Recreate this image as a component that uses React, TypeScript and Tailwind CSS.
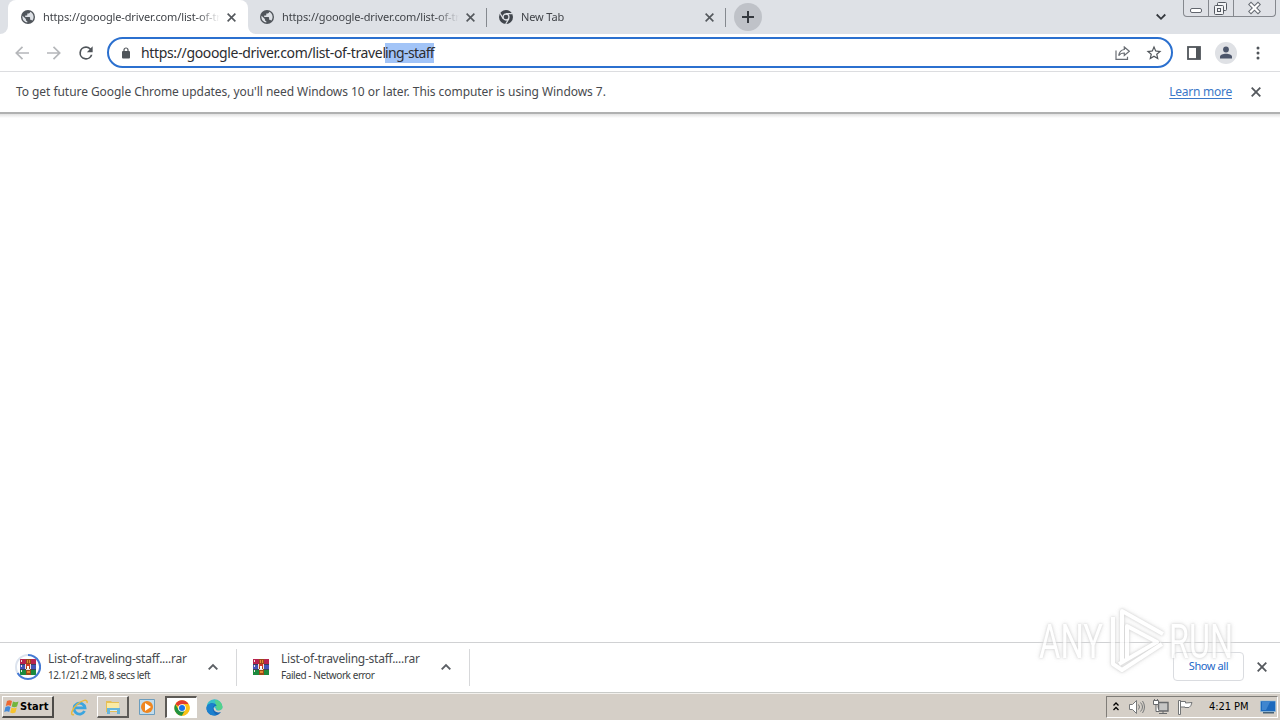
import type { ReactNode } from 'react';

function Globe() {
  return (
    <svg className="size-[14px] shrink-0" viewBox="2 2 20 20">
      <circle cx="12" cy="12" r="10" fill="#50555b" />
      <path
        d="M11 19.9C7 19.4 4 16 4 12c0-.6.1-1.2.2-1.8L9 15v1c0 1.100.9 2 2 2v1.930zM17.900 17.400c-.3-.8-1-1.400-1.900-1.400h-1v-3c0-.6-.4-1-1-1H8v-2h2c.6 0 1-.4 1-1V7h2c1.100 0 2-.9 2-2v-.4c2.900 1.200 5 4.100 5 7.400 0 2.100-.8 4-2.100 5.400z"
        fill="#dee1e6"
      />
    </svg>
  );
}

function Close({ className = 'size-[9px]' }: { className?: string }) {
  return (
    <svg className={`shrink-0 ${className}`} viewBox="0 0 10 10" fill="none" stroke="#54585d" strokeWidth="1.800">
      <path d="M.7.7l8.600 8.600M9.300.7L.7 9.300" />
    </svg>
  );
}

function ChromeMono() {
  return (
    <svg className="size-[14px] shrink-0" viewBox="0 0 14 14">
      <circle cx="7" cy="7" r="7" fill="#41464d" />
      <circle cx="7" cy="7" r="3" fill="none" stroke="#dee1e6" strokeWidth="1.300" />
      <path d="M7 3.700h6.500M4.200 8.600L1 3.200M9.900 8.600l-3.200 5.400" stroke="#dee1e6" strokeWidth="1.200" />
    </svg>
  );
}

function ChromeColor() {
  return (
    <svg className="size-4" viewBox="0 0 48 48">
      <circle cx="24" cy="24" r="23" fill="#fbc116" />
      <path d="M24 24L4.100 12.500A23 23 0 0 1 43.900 12.500H24z" fill="#e33b2e" />
      <path d="M4.100 12.500A23 23 0 0 0 24 47l10-17.300L24 24 14 29.700z" fill="#229342" />
      <path d="M24 12.500h19.900A23 23 0 0 1 24 47l10-17.300z" fill="#fbc116" />
      <circle cx="24" cy="24" r="11.500" fill="#fff" />
      <circle cx="24" cy="24" r="9" fill="#1a73e8" />
    </svg>
  );
}

function RarIcon() {
  return (
    <svg className="size-4" viewBox="0 0 16 16" shapeRendering="crispEdges">
      <path fill="#b8234f" d="M0 0h16v5H0z" />
      <path fill="#4554b8" d="M0 5h16v5H0z" />
      <path fill="#1c8a3e" d="M0 10h16v6H0z" />
      <path fill="#39405c" d="M0 5h16v1H0zM0 10h16v1H0z" />
      <path fill="#9b4a18" d="M6 0h5v16H6z" />
      <path fill="#e78a32" d="M7 1h1v3H7zM9 1h1v3H9zM7 12h3v2H7z" />
      <path fill="#efe6e0" d="M5 5h1v5H5zM10 5h1v5h-1zM6 10h4v1H6zM1 1h1v2H1zM1 6h1v2H1zM1 11h1v2H1z" />
      <path fill="#d23a28" d="M6 5h4v3H6z" />
      <path fill="#fff" d="M7 7h2v3H7z" />
    </svg>
  );
}

function Tab({ icon, title }: { icon: ReactNode; title: string }) {
  return (
    <div className="flex h-[34px] items-center">
      {icon}
      <span className="ml-[8px] w-[177px] overflow-hidden whitespace-nowrap text-[11px] leading-[16px] tracking-[-0.14px] text-[#414449] [mask-image:linear-gradient(to_right,black_87%,transparent_100%)]">
        {title}
      </span>
      <Close className="ml-[7px] size-[9px]" />
    </div>
  );
}

function TabStrip() {
  return (
    <div className="flex h-[34px] bg-[#dee1e6]">
      <div className="flex w-[8px] items-end bg-white">
        <div className="h-full w-full rounded-br-[8px] bg-[#dee1e6]" />
      </div>
      <div className="w-[240px] rounded-t-[8px] bg-white pl-[13px]">
        <Tab icon={<Globe />} title="https://gooogle-driver.com/list-of-traveling-staff" />
      </div>
      <div className="flex w-[238px] bg-white">
        <div className="w-full rounded-bl-[8px] bg-[#dee1e6] pl-[12px]">
          <Tab icon={<Globe />} title="https://gooogle-driver.com/list-of-traveling-staff" />
        </div>
      </div>
      <div className="mt-[8px] h-[19px] w-px bg-[#85898f]" />
      <div className="w-[238px] pl-[12px]">
        <Tab icon={<ChromeMono />} title="New Tab" />
      </div>
      <div className="mt-[8px] h-[19px] w-px bg-[#85898f]" />
      <div className="ml-[8px] mt-[3px] flex size-[28px] items-center justify-center rounded-full bg-[#bfc2c8]">
        <svg className="size-[12px]" viewBox="0 0 12 12" stroke="#34383e" strokeWidth="2">
          <path d="M6 0v12M0 6h12" />
        </svg>
      </div>
      <svg className="ml-auto mr-[17px] mt-[13px] h-[8px] w-[10px]" viewBox="0 0 10 8" fill="none" stroke="#34383e" strokeWidth="1.800">
        <path d="M.7 1.500L5 5.800l4.300-4.300" />
      </svg>
      <div className="mr-[4px] flex h-[17px] w-[93px] rounded-b-[4px] border border-t-0 border-[#85888e] bg-[#dfe1e6]">
        <div className="w-[25px] border-r border-[#85888e]">
          <svg className="h-[16px] w-[24px]" viewBox="0 0 24 16" fill="#fff" stroke="#62666e">
            <rect x="6.500" y="8.500" width="11" height="4" rx="1.500" />
          </svg>
        </div>
        <div className="w-[25px] border-r border-[#85888e]">
          <svg className="h-[16px] w-[24px]" viewBox="0 0 24 16" fill="#f3f4f6" stroke="#555961">
            <rect x="8.500" y="2.500" width="9" height="8" rx="1" />
            <rect x="5.500" y="5.500" width="9" height="9" rx="1" />
            <rect x="8.500" y="8.500" width="3" height="3" />
          </svg>
        </div>
        <svg className="h-[16px] w-[41px]" viewBox="0 0 41 16" fill="none" strokeLinecap="square">
          <path d="M17 4.500l7 7M24 4.500l-7 7" stroke="#666a72" strokeWidth="4.200" />
          <path d="M17 4.500l7 7M24 4.500l-7 7" stroke="#fff" strokeWidth="2.200" />
        </svg>
      </div>
    </div>
  );
}

function Toolbar() {
  return (
    <div className="flex h-[38px] items-center border-b border-[#dcdde0] bg-white">
      <svg className="ml-[15px] size-[14px]" viewBox="0 0 14 14" fill="none" stroke="#b5b7ba" strokeWidth="1.700">
        <path d="M14 7H1.500M7.500.8L1.300 7l6.200 6.200" />
      </svg>
      <svg className="ml-[18px] size-[14px]" viewBox="0 0 14 14" fill="none" stroke="#b5b7ba" strokeWidth="1.700">
        <path d="M0 7h12.500M6.500.8L12.700 7l-6.200 6.200" />
      </svg>
      <svg className="ml-[15px] size-[20px]" viewBox="0 0 24 24" fill="#50555a">
        <path d="M17.650 6.350A7.960 7.960 0 0 0 12 4a8 8 0 1 0 7.730 10h-2.080A6 6 0 1 1 12 6c1.660 0 3.140.69 4.220 1.780L13 11h7V4z" />
      </svg>
      <div className="ml-[11px] flex h-[31px] w-[1066px] items-center rounded-full border-2 border-[#2b70cf] bg-white">
        <svg className="ml-[13px] h-[12px] w-[8px]" viewBox="0 0 8 12">
          <rect y="4" width="8" height="7.500" rx="1" fill="#50555a" />
          <path d="M2 4.500V3a2 2 0 0 1 4 0v1.500" fill="none" stroke="#50555a" strokeWidth="1.200" />
        </svg>
        <div className="ml-[11px] flex whitespace-nowrap text-[14px] leading-[20px] text-[#2c2d30]">
          <span className="w-[244px] tracking-[-0.35px]">https://gooogle-driver.com/list-of-travel</span>
          <span className="w-[49px] bg-[#a2c4f7] tracking-[-0.62px]">ing-staff</span>
        </div>
        <svg className="ml-auto h-[14px] w-[15px]" viewBox="0 0 15 14" fill="none" stroke="#696d73" strokeWidth="1.200">
          <path d="M1 4.500v8.900h11.500v-2.600M9.300 1l5 4.300-5 4.200V7C6.700 7 5 7.800 3.700 9.600 4.200 6.200 6 3.900 9.300 3.500z" />
        </svg>
        <svg className="ml-[15px] mr-[8px] size-[18px]" viewBox="0 0 24 24" fill="#50555a">
          <path d="M22 9.240l-7.190-.62L12 2 9.190 8.630 2 9.240l5.460 4.730L5.820 21 12 17.270 18.180 21l-1.630-7.030L22 9.240zM12 15.400l-3.760 2.270 1-4.280-3.320-2.880 4.380-.38L12 6.100l1.710 4.040 4.380.38-3.320 2.880 1 4.280L12 15.400z" />
        </svg>
      </div>
      <svg className="ml-[14px] h-[14px] w-[14px]" viewBox="0 0 14 14">
        <rect x="1" y="1" width="12" height="12" fill="none" stroke="#50555a" strokeWidth="1.800" />
        <path d="M9 1h4v12H9z" fill="#50555a" />
      </svg>
      <svg className="ml-[14px] size-[22px]" viewBox="0 0 22 22">
        <circle cx="11" cy="11" r="11" fill="#dfe1e5" />
        <circle cx="11" cy="7.500" r="2.900" fill="#4c566b" />
        <path d="M5 16.500v-1.700c0-4 12-4 12 0v1.700z" fill="#4c566b" />
      </svg>
      <svg className="ml-[19px] h-[14px] w-[4px]" viewBox="0 0 4 14" fill="#50555a">
        <circle cx="2" cy="2" r="1.500" />
        <circle cx="2" cy="7" r="1.500" />
        <circle cx="2" cy="12" r="1.500" />
      </svg>
    </div>
  );
}

function InfoBar() {
  return (
    <div className="flex h-[40px] items-center bg-white pl-[16px] pr-[19px] text-[12px] leading-[16px]">
      <span className="whitespace-nowrap tracking-[-0.055px] text-[#484a4e]">
        To get future Google Chrome updates, you'll need Windows 10 or later. This computer is using Windows 7.
      </span>
      <a className="ml-auto mr-[19px] whitespace-nowrap tracking-[-0.25px] text-[#3b78c8] underline underline-offset-2">
        Learn more
      </a>
      <Close className="size-[10px]" />
    </div>
  );
}

function Download({ status, busy }: { status: string; busy?: boolean }) {
  return (
    <div className="flex h-[49px] w-[233px] items-start">
      <div className="ml-[11px] mt-[11px] flex size-[26px] items-center justify-center">
        <svg className="absolute size-[26px]" viewBox="0 0 26 26" fill="none" strokeWidth="2">
          {busy && <circle cx="13" cy="13" r="12" stroke="#dce3ee" />}
          {busy && <path d="M13 1a12 12 0 1 1-10.400 18" stroke="#4479d4" />}
        </svg>
        <RarIcon />
      </div>
      <div className="ml-[7px] mt-[7px] w-[147px] whitespace-nowrap">
        <div className="text-[12px] leading-[17px] tracking-[-0.25px] text-[#484b4f]">List-of-traveling-staff....rar</div>
        <div className="text-[10px] leading-[16px] tracking-[-0.43px] text-[#3c3f43]">{status}</div>
      </div>
      <svg className="ml-[13px] mt-[20px] h-[8px] w-[10px]" viewBox="0 0 10 8" fill="none" stroke="#5b5f64" strokeWidth="1.900">
        <path d="M.7 6.300L5 2l4.300 4.300" />
      </svg>
      <div className="ml-auto mt-[6px] h-[37px] w-px bg-[#d7d8da]" />
    </div>
  );
}

function Shelf() {
  return (
    <div className="flex h-[50px] border-t border-[#d0d1d3] bg-white">
      <div className="w-[237px] pl-[4px]">
        <Download busy status="12.1/21.2 MB, 8 secs left" />
      </div>
      <Download status="Failed - Network error" />
      <div className="ml-auto mr-[13px] mt-[9px] flex h-[29px] w-[71px] items-center justify-center whitespace-nowrap rounded-[4px] border border-[#dadce0] text-[11px] tracking-[-0.4px] text-[#2468c8]">
        Show all
      </div>
      <Close className="mr-[13px] mt-[19px] size-[10px]" />
    </div>
  );
}

function Watermark() {
  return (
    <svg className="absolute left-[1030px] top-[602px] h-[78px] w-[210px]" viewBox="0 0 210 78">
      <g
        className="opacity-80 [filter:drop-shadow(0_0_1px_#c8c8c8)_drop-shadow(0_0_2px_#dedede)]"
        fill="#fff"
        fontFamily="Roboto, sans-serif"
        fontSize="48"
      >
        <text x="9" y="56" textLength="64" lengthAdjust="spacingAndGlyphs">ANY</text>
        <text x="139" y="56" textLength="64" lengthAdjust="spacingAndGlyphs">RUN</text>
        <path
          d="M83 15v47l9 6L132 42M92 60V9L133 32M97 56V24L127 40 89 62"
          fill="none"
          stroke="#fff"
          strokeWidth="4"
          strokeLinejoin="round"
        />
      </g>
    </svg>
  );
}

function Taskbar() {
  return (
    <div className="flex h-[28px] items-start border-t border-[#c9cbc8] bg-[#d5cfc7] [box-shadow:inset_0_1px_#f3f1ed] [font-family:'DejaVu_Sans_Condensed','DejaVu_Sans',sans-serif]">
      <div className="ml-[2px] mt-[3px] flex h-[22px] w-[52px] items-center border-b-2 border-l border-r-2 border-t border-b-[#4d4b48] border-l-white border-r-[#4d4b48] border-t-white pl-px">
        <svg className="size-[15px] shrink-0" viewBox="0 0 15 15">
          <path d="M3 2c2-1.300 3.500-1 5 0L6.800 7c-1.500-1-3-1-5 0z" fill="#ed6831" />
          <path d="M9 2.500c2 1 3.500 1 5.500 0L13 7.500c-2 1-3.500 1-5.300 0z" fill="#72b53c" />
          <path d="M1.500 8c2-1 3.500-1 5 0l-1.300 5c-1.500-1-3-1-5 0z" fill="#4389d8" />
          <path d="M7.500 8.500c2 1 3.500 1 5.300 0l-1.400 5c-2 1-3.500 1-5.200 0z" fill="#f6c32e" />
        </svg>
        <span className="ml-px whitespace-nowrap text-[11px] font-bold leading-[16px] tracking-[0.1px] text-black [font-family:'DejaVu_Sans_Condensed','DejaVu_Sans',sans-serif]">
          Start
        </span>
      </div>
      <svg className="ml-[17px] mt-[6px] size-[17px]" viewBox="0 0 17 17" fill="none">
        <path d="M13.500 12A5.500 5.500 0 1 1 14 8.800H4" stroke="#3ba5df" strokeWidth="2.800" />
        <path d="M3 15.500C-1.500 17 1 10 6 5.500S17-.5 16 4" stroke="#e7b93f" strokeWidth="1.500" />
      </svg>
      <div className="ml-[9px] mt-[3px] flex h-[22px] w-[32px] items-center justify-center border-b-2 border-l border-r-2 border-t border-b-[#5d5a56] border-l-white border-r-[#5d5a56] border-t-white">
        <svg className="size-[16px]" viewBox="0 0 16 16">
          <path d="M1 2h5l1 1h7v10H1z" fill="#e6bf56" />
          <path d="M2 4h12v6H2z" fill="#faeaa5" />
          <path d="M2 9h13v6h-3v-3H5v3H2z" fill="#67b6dc" />
          <path d="M5 11h7v1H5z" fill="#d6f1fa" />
        </svg>
      </div>
      <svg className="ml-[10px] mt-[6px] size-[16px]" viewBox="0 0 16 16">
        <path d="M.5.500h15v15H.5z" fill="#c2dcec" stroke="#6b9dbe" />
        <circle cx="8" cy="8" r="6" fill="#ef8620" />
        <path d="M6 4l6 4-6 4z" fill="#fff" />
      </svg>
      <div className="ml-[10px] mt-[3px] flex h-[22px] w-[32px] items-center justify-center border-b border-l-2 border-r border-t-2 border-b-white border-l-[#5d5a56] border-r-white border-t-[#5d5a56] bg-white">
        <ChromeColor />
      </div>
      <svg className="ml-[9px] mt-[6px] size-[17px]" viewBox="0 0 17 17">
        <path d="M.5 8.500A8 8 0 0 1 16.500 8c0 3-2.800 4-6 3.200L9 8.500z" fill="#38bfc9" />
        <path d="M9 1a7.500 7.500 0 0 1 7.500 7c0 2.500-2.500 3.500-5 3L10 8z" fill="#54d18b" />
        <path d="M.5 9c.5-5 8-6.500 10.300-2.200C8 6.500 7 8.500 8 11c1 2 4 3 7 2-4 6-14.500 4-14.500-4z" fill="#1768b8" />
        <path d="M.5 9C1 4 7 3.500 9 6c-3 1-3.500 6 1.500 10.200C5 17.500.5 14 .5 9z" fill="#1b80ce" />
      </svg>
      <div className="ml-auto mr-[2px] mt-[3px] flex h-[22px] w-[172px] items-center border border-b-white border-l-[#807d78] border-r-white border-t-[#807d78]">
        <svg className="ml-[6px] h-[10px] w-[6px]" viewBox="0 0 6 10" fill="none" stroke="#000" strokeWidth="1.300">
          <path d="M.5 3.500L3 1l2.500 2.500M.5 8L3 5.500 5.500 8" />
        </svg>
        <svg className="ml-[10px] h-[16px] w-[16px]" viewBox="0 0 16 16" fill="none" stroke="#77797a">
          <path d="M.5 5.500h3l4-4v13l-4-4h-3z" fill="#fff" />
          <path d="M9.500 5.500q2 2.500 0 5M11.500 3.500q4 4.500 0 9M13.500 2q4 6 0 12" />
        </svg>
        <svg className="ml-[8px] size-[16px]" viewBox="0 0 16 16" fill="#fff" stroke="#686a6c">
          <path d="M5.500 3.500h9.500v8.500H5.500z" fill="#c6c6c5" strokeWidth="1.400" />
          <path d="M.5 1.500h5v4h-5zM3 5.500v7h3M6 14.500h8M10 12v2" />
          <path d="M1.500 0v2M4.500 0v2" />
        </svg>
        <svg className="ml-[8px] size-[16px]" viewBox="0 0 16 16" fill="#fff" stroke="#737576">
          <path d="M1.500 1.500h2v14h-2zM3.500 2.500h5v1.500l6.500-.5q-1 4-3 5H8V8H3.500z" />
        </svg>
        <span className="ml-[16px] w-[42px] whitespace-nowrap text-[11px] tracking-[-0.05px] text-black">4:21 PM</span>
        <svg className="ml-[9px] h-[14px] w-[16px] shrink-0" viewBox="0 0 16 14">
          <path d="M.5 1h15v10.500H.5z" fill="#1c69bd" stroke="#90bfdf" strokeWidth=".6" />
          <path d="M2 2h8L6 10H2z" fill="#3f86cf" />
          <path d="M3 12h11v1.500H3z" fill="#456177" />
        </svg>
      </div>
    </div>
  );
}

export default function App() {
  return (
    <div className="relative flex h-[720px] w-[1280px] flex-col overflow-hidden bg-white [font-family:'Noto_Sans',sans-serif]">
      <TabStrip />
      <Toolbar />
      <InfoBar />
      <div className="h-[6px] bg-[linear-gradient(to_bottom,#b0b1b1_0_2px,#e1e1e1_2px,#fff)]" />
      <div className="flex-1 bg-white" />
      <Shelf />
      <Taskbar />
      <Watermark />
    </div>
  );
}
